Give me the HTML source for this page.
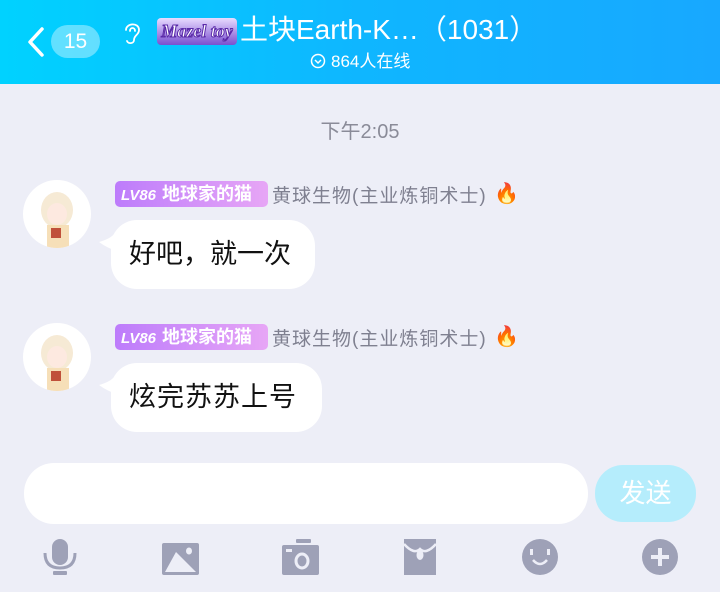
<!DOCTYPE html>
<html><head><meta charset="utf-8"><style>
*{margin:0;padding:0;box-sizing:border-box}
body{width:720px;height:592px;overflow:hidden;background:#edeef7;font-family:"Liberation Sans","Noto Sans CJK SC",sans-serif;position:relative}
.hdr{position:absolute;left:0;top:0;width:720px;height:84px;background:linear-gradient(90deg,#00d2ff,#0fb6ff 50%,#18a8ff)}
.abs{position:absolute}
.badge{position:absolute;height:26px;border-radius:5px;background:linear-gradient(90deg,#bd7cfb,#e7a6f6);color:#fff;font-size:18px;line-height:26px;padding-left:6px;font-weight:bold;width:153px;left:115px;white-space:nowrap}
.badge i{font-size:15px;font-style:italic;margin-right:6px}
.name{position:absolute;left:272px;color:#7f8090;font-size:19px;letter-spacing:1px;white-space:nowrap}
.bub{position:absolute;left:111px;background:#fff;border-radius:26px;height:69px;font-size:27px;line-height:69px;padding-left:18px;color:#111;white-space:nowrap}
.av{position:absolute;left:23px;width:68px;height:68px;border-radius:50%;background:#fff;overflow:hidden}
</style></head><body>
<div class="hdr"></div>
<svg class="abs" style="left:26px;top:27px" width="20" height="30"><path d="M16 2 L4 15 L16 28" stroke="#fff" stroke-width="3.5" fill="none" stroke-linecap="round" stroke-linejoin="round"/></svg>
<div class="abs" style="left:51px;top:25px;width:49px;height:33px;border-radius:17px;background:rgba(255,255,255,.38);color:#fff;font-size:21px;line-height:33px;text-align:center">15</div>
<svg class="abs" style="left:122px;top:20px" width="22" height="26"><path d="M4 10 C4 3 17 2 17 10 C17 15 12 15 12 20 C12 24 6 24 5 21 M8 11 C8 7 13 7 13 11" stroke="#fff" stroke-width="1.8" fill="none" stroke-linecap="round"/></svg>
<div class="abs" style="left:157px;top:18px;width:80px;height:27px;border-radius:4px;background:linear-gradient(#e8dcff,#7a4fd0);color:#fff;font:italic bold 18px/27px 'Liberation Serif',serif;text-align:center;-webkit-text-stroke:1px #5a2aa8">Mazel toy</div>
<div class="abs" style="left:240px;top:13px;color:#fff;font-size:28px;line-height:34px;white-space:nowrap">土块Earth-K…（1031）</div>
<svg class="abs" style="left:310px;top:53px" width="17" height="17"><circle cx="8" cy="8" r="6.5" stroke="#fff" stroke-width="1.5" fill="none"/><path d="M5 7 L8 10 L11 7" stroke="#fff" stroke-width="1.5" fill="none"/></svg>
<div class="abs" style="left:331px;top:51px;color:#fff;font-size:17px;line-height:21px">864人在线</div>
<div class="abs" style="left:0;width:720px;top:120px;text-align:center;color:#8a8b98;font-size:20px;line-height:24px">下午2:05</div>

<div class="av" style="top:180px"><svg width="68" height="68"><ellipse cx="34" cy="30" rx="16" ry="18" fill="#f6ead5"/><ellipse cx="34" cy="34" rx="10" ry="11" fill="#fde9e0"/><rect x="24" y="45" width="22" height="23" fill="#f6dfb8"/><rect x="28" y="48" width="10" height="10" fill="#c0503a"/></svg></div>
<div class="badge" style="top:181px"><i>LV86</i>地球家的猫</div>
<div class="name" style="top:181px">黄球生物(主业炼铜术士)</div>
<div class="abs" style="left:494px;top:181px;font-size:20px">🔥</div>
<svg class="abs" style="left:99px;top:232px" width="20" height="20"><path d="M0 10 Q14 6 16 0 L20 20 Q8 16 0 10Z" fill="#fff"/></svg>
<div class="bub" style="top:220px;width:204px">好吧，就一次</div>

<div class="av" style="top:323px"><svg width="68" height="68"><ellipse cx="34" cy="30" rx="16" ry="18" fill="#f6ead5"/><ellipse cx="34" cy="34" rx="10" ry="11" fill="#fde9e0"/><rect x="24" y="45" width="22" height="23" fill="#f6dfb8"/><rect x="28" y="48" width="10" height="10" fill="#c0503a"/></svg></div>
<div class="badge" style="top:324px"><i>LV86</i>地球家的猫</div>
<div class="name" style="top:324px">黄球生物(主业炼铜术士)</div>
<div class="abs" style="left:494px;top:324px;font-size:20px">🔥</div>
<svg class="abs" style="left:99px;top:375px" width="20" height="20"><path d="M0 10 Q14 6 16 0 L20 20 Q8 16 0 10Z" fill="#fff"/></svg>
<div class="bub" style="top:363px;width:211px;letter-spacing:1px">炫完苏苏上号</div>

<div class="abs" style="left:24px;top:463px;width:564px;height:61px;border-radius:30px;background:#fff"></div>
<div class="abs" style="left:595px;top:465px;width:101px;height:57px;border-radius:28px;background:#b5edfc;color:#fff;font-size:26px;line-height:57px;text-align:center">发送</div>

<svg class="abs" style="left:0;top:535px" width="720" height="50" fill="#9ea1b7">
<rect x="52" y="4" width="16" height="26" rx="8"/><path d="M45 18 Q45 33 60 33 Q75 33 75 18" stroke="#9ea1b7" stroke-width="3" fill="none"/><rect x="53" y="36" width="14" height="4" rx="1"/>
<rect x="162" y="8" width="37" height="32" rx="2"/><path d="M165 37 L176 17 L196 37Z" fill="#edeef7"/><ellipse cx="189" cy="16" rx="3" ry="3.5" fill="#edeef7"/>
<rect x="282" y="10" width="37" height="30" rx="2"/><rect x="296" y="4" width="15" height="4" rx="1"/><ellipse cx="302" cy="26" rx="6" ry="7" fill="none" stroke="#edeef7" stroke-width="3"/><rect x="286" y="14" width="6" height="3" fill="#edeef7"/>
<path d="M404 4 L436 4 L436 40 L404 40Z"/><path d="M404 9 Q414 20 420 14 Q426 20 436 9" stroke="#edeef7" stroke-width="2.5" fill="none"/><ellipse cx="420" cy="20" rx="3.5" ry="5" fill="#edeef7"/>
<circle cx="540" cy="22" r="18"/><rect x="530" y="14" width="3" height="6" fill="#edeef7"/><rect x="547" y="14" width="3" height="6" fill="#edeef7"/><path d="M533 25 Q540 33 547 25" stroke="#edeef7" stroke-width="2.5" fill="none"/>
<circle cx="660" cy="22" r="18"/><rect x="658" y="13" width="4" height="18" fill="#edeef7"/><rect x="651" y="20" width="18" height="4" fill="#edeef7"/>
</svg>
</body></html>
